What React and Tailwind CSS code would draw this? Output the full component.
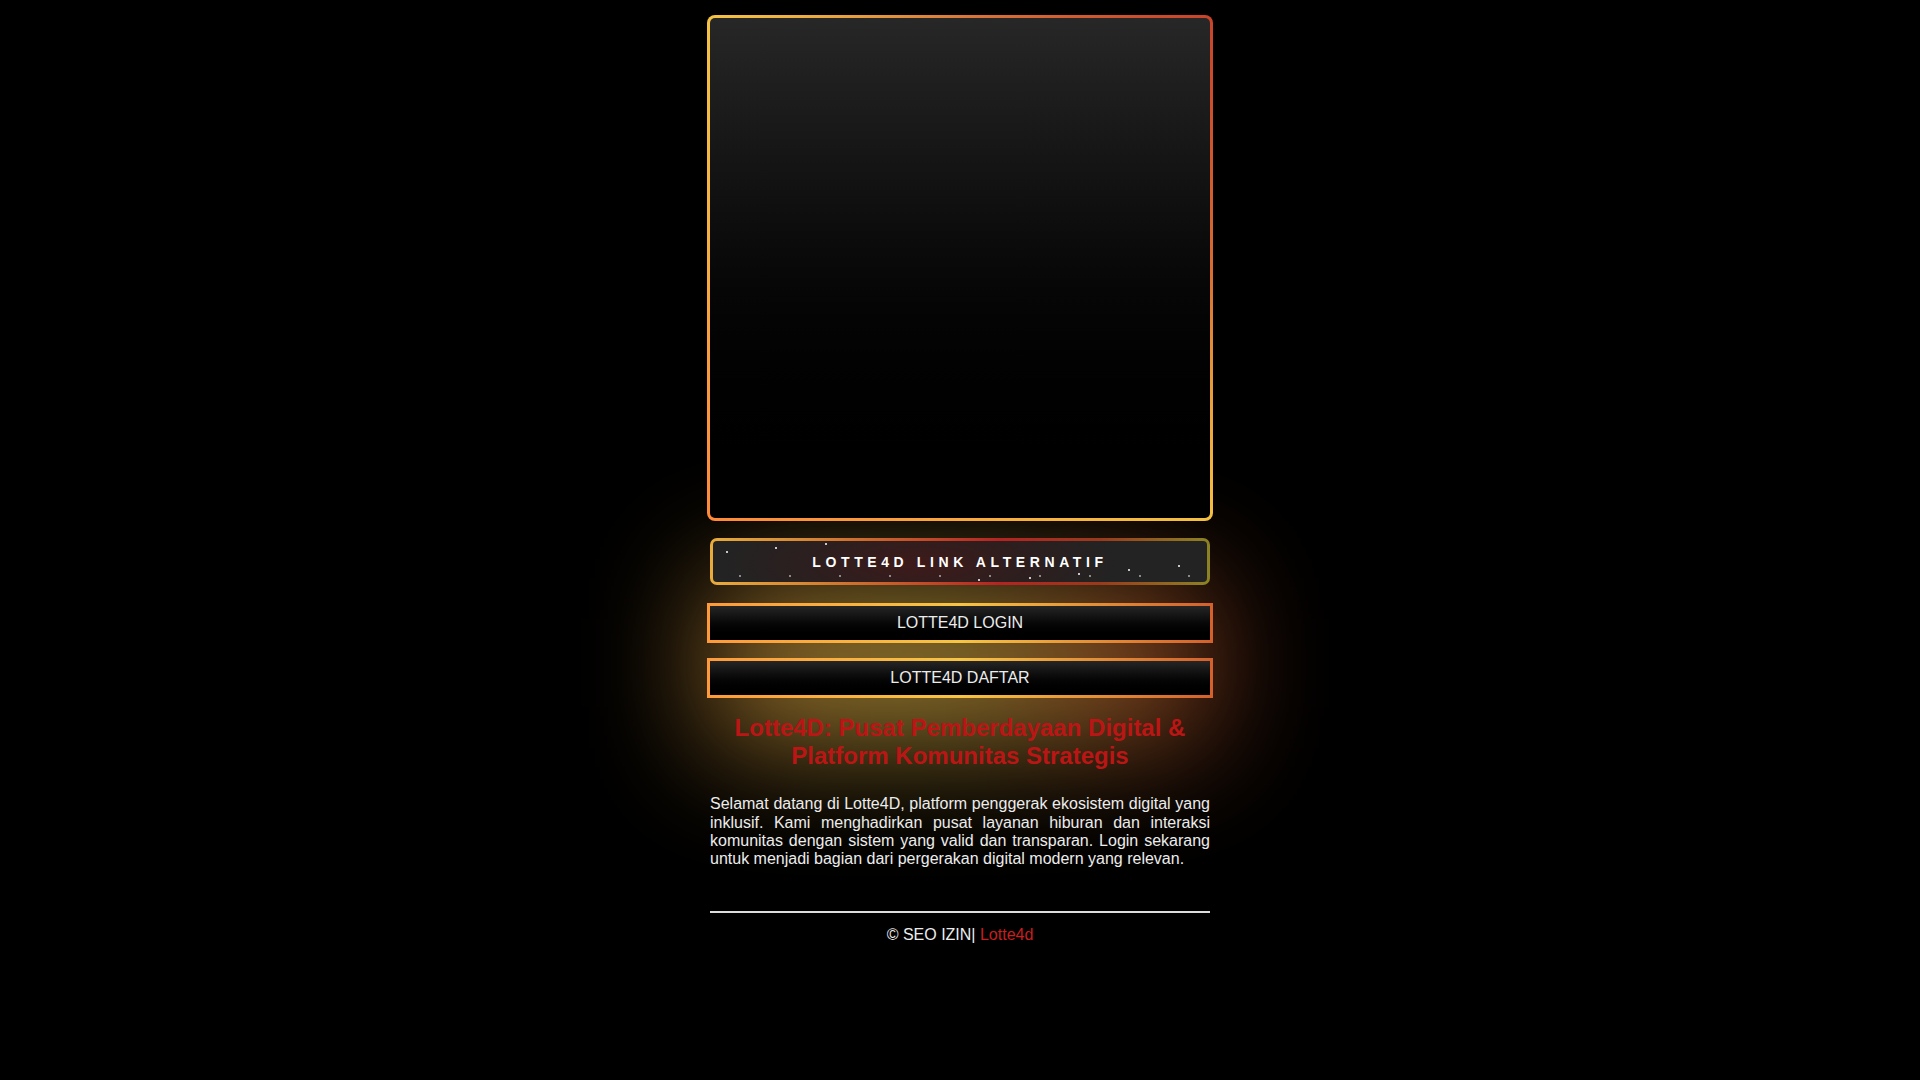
import React from "react";

const whiteDots = [
  [13, 10], [62, 6], [112, 2], [265, 38], [316, 36], [365, 32], [415, 28], [465, 24],
];
const grayDots = [26, 76, 126, 176, 226, 276, 326, 376, 426, 475];

function LinkBar() {
  return (
    <div className="mx-[3px] h-[47px] rounded-[7px] p-[3px] bg-[image:linear-gradient(90deg,#e8ac3a_0%,#d88a34_18%,#c8582a_38%,#b52323_58%,#9a3a1c_78%,#8c8322_100%)]">
      <div className="relative h-full rounded-[4px] overflow-hidden bg-[image:radial-gradient(ellipse_200px_60px_at_42%_55%,#3e1a1a_0%,#2e1e1e_50%,#232323_100%)] flex items-center justify-center">
        {whiteDots.map(([x, y], i) => (
          <span
            key={"w" + i}
            className="absolute w-[2px] h-[2px] rounded-full bg-white"
            style={{ left: x, top: y }}
          />
        ))}
        {grayDots.map((x, i) => (
          <span
            key={"g" + i}
            className="absolute w-[2px] h-[2px] bg-[#8a8a8a]"
            style={{ left: x, top: 34 }}
          />
        ))}
        <span className="relative text-white font-bold text-[14px] tracking-[4.6px] leading-none">
          LOTTE4D LINK ALTERNATIF
        </span>
      </div>
    </div>
  );
}

function Btn({ children, className = "" }) {
  return (
    <div className={"h-[40px] p-[3px] bg-[image:linear-gradient(90deg,#ff9a3a_0%,#f7c443_50%,#d4602c_100%)] " + className}>
      <div className="h-full bg-linear-to-b from-[#262626] to-[#000000] flex items-center justify-center text-[#ececec] text-[16px]">
        {children}
      </div>
    </div>
  );
}

export default function App() {
  return (
    <div className="relative isolate min-h-screen bg-black font-['Liberation_Sans',Arial,sans-serif] text-[16px] text-[#ececec]">
      <div className="mx-auto w-[506px] pt-[15px] pb-10 flex flex-col">
        <div className="h-[506px] rounded-[8px] p-[3px] bg-[image:conic-gradient(from_0deg,#d9783a_0deg,#c8442a_45deg,#d86c30_90deg,#f5c040_135deg,#fca83c_180deg,#ff8a3a_225deg,#f8ac3e_270deg,#f4c244_315deg,#d9783a_360deg)]">
          <div className="h-full rounded-[5px] bg-linear-to-b from-[#272727] to-[#000000]" />
        </div>

        <div className="relative mt-[17px]">
          <div className="absolute -z-10 left-[0px] right-[0px] top-[40px] bottom-[-50px] opacity-60 blur-[60px] bg-[image:linear-gradient(90deg,#e8a040_0%,#e8c24a_45%,#c4502a_100%)]" />
          <div className="flex flex-col">
            <LinkBar />
            <Btn className="mt-[18px]">LOTTE4D LOGIN</Btn>
            <Btn className="mt-[15px]">LOTTE4D DAFTAR</Btn>
          </div>
        </div>

        <h1 className="mt-[16px] mx-[3px] text-center text-[24px] font-bold leading-[27.6px] text-[#bb1515]">
          Lotte4D: Pusat Pemberdayaan Digital &amp; Platform Komunitas Strategis
        </h1>

        <p className="mt-[26px] mx-[3px] text-justify text-[16px] leading-[18.4px] text-[#ececec]">
          Selamat datang di Lotte4D, platform penggerak ekosistem digital yang inklusif. Kami menghadirkan pusat layanan hiburan dan interaksi komunitas dengan sistem yang valid dan transparan. Login sekarang untuk menjadi bagian dari pergerakan digital modern yang relevan.
        </p>

        <div className="mt-[42px] mx-[3px] h-[2px] bg-[#dcdcdc]" />

        <div className="mt-[13px] text-center text-[16px] leading-[18.4px] text-[#ececec]">
          © SEO IZIN| <span className="text-[#c81e1e]">Lotte4d</span>
        </div>
      </div>
    </div>
  );
}
